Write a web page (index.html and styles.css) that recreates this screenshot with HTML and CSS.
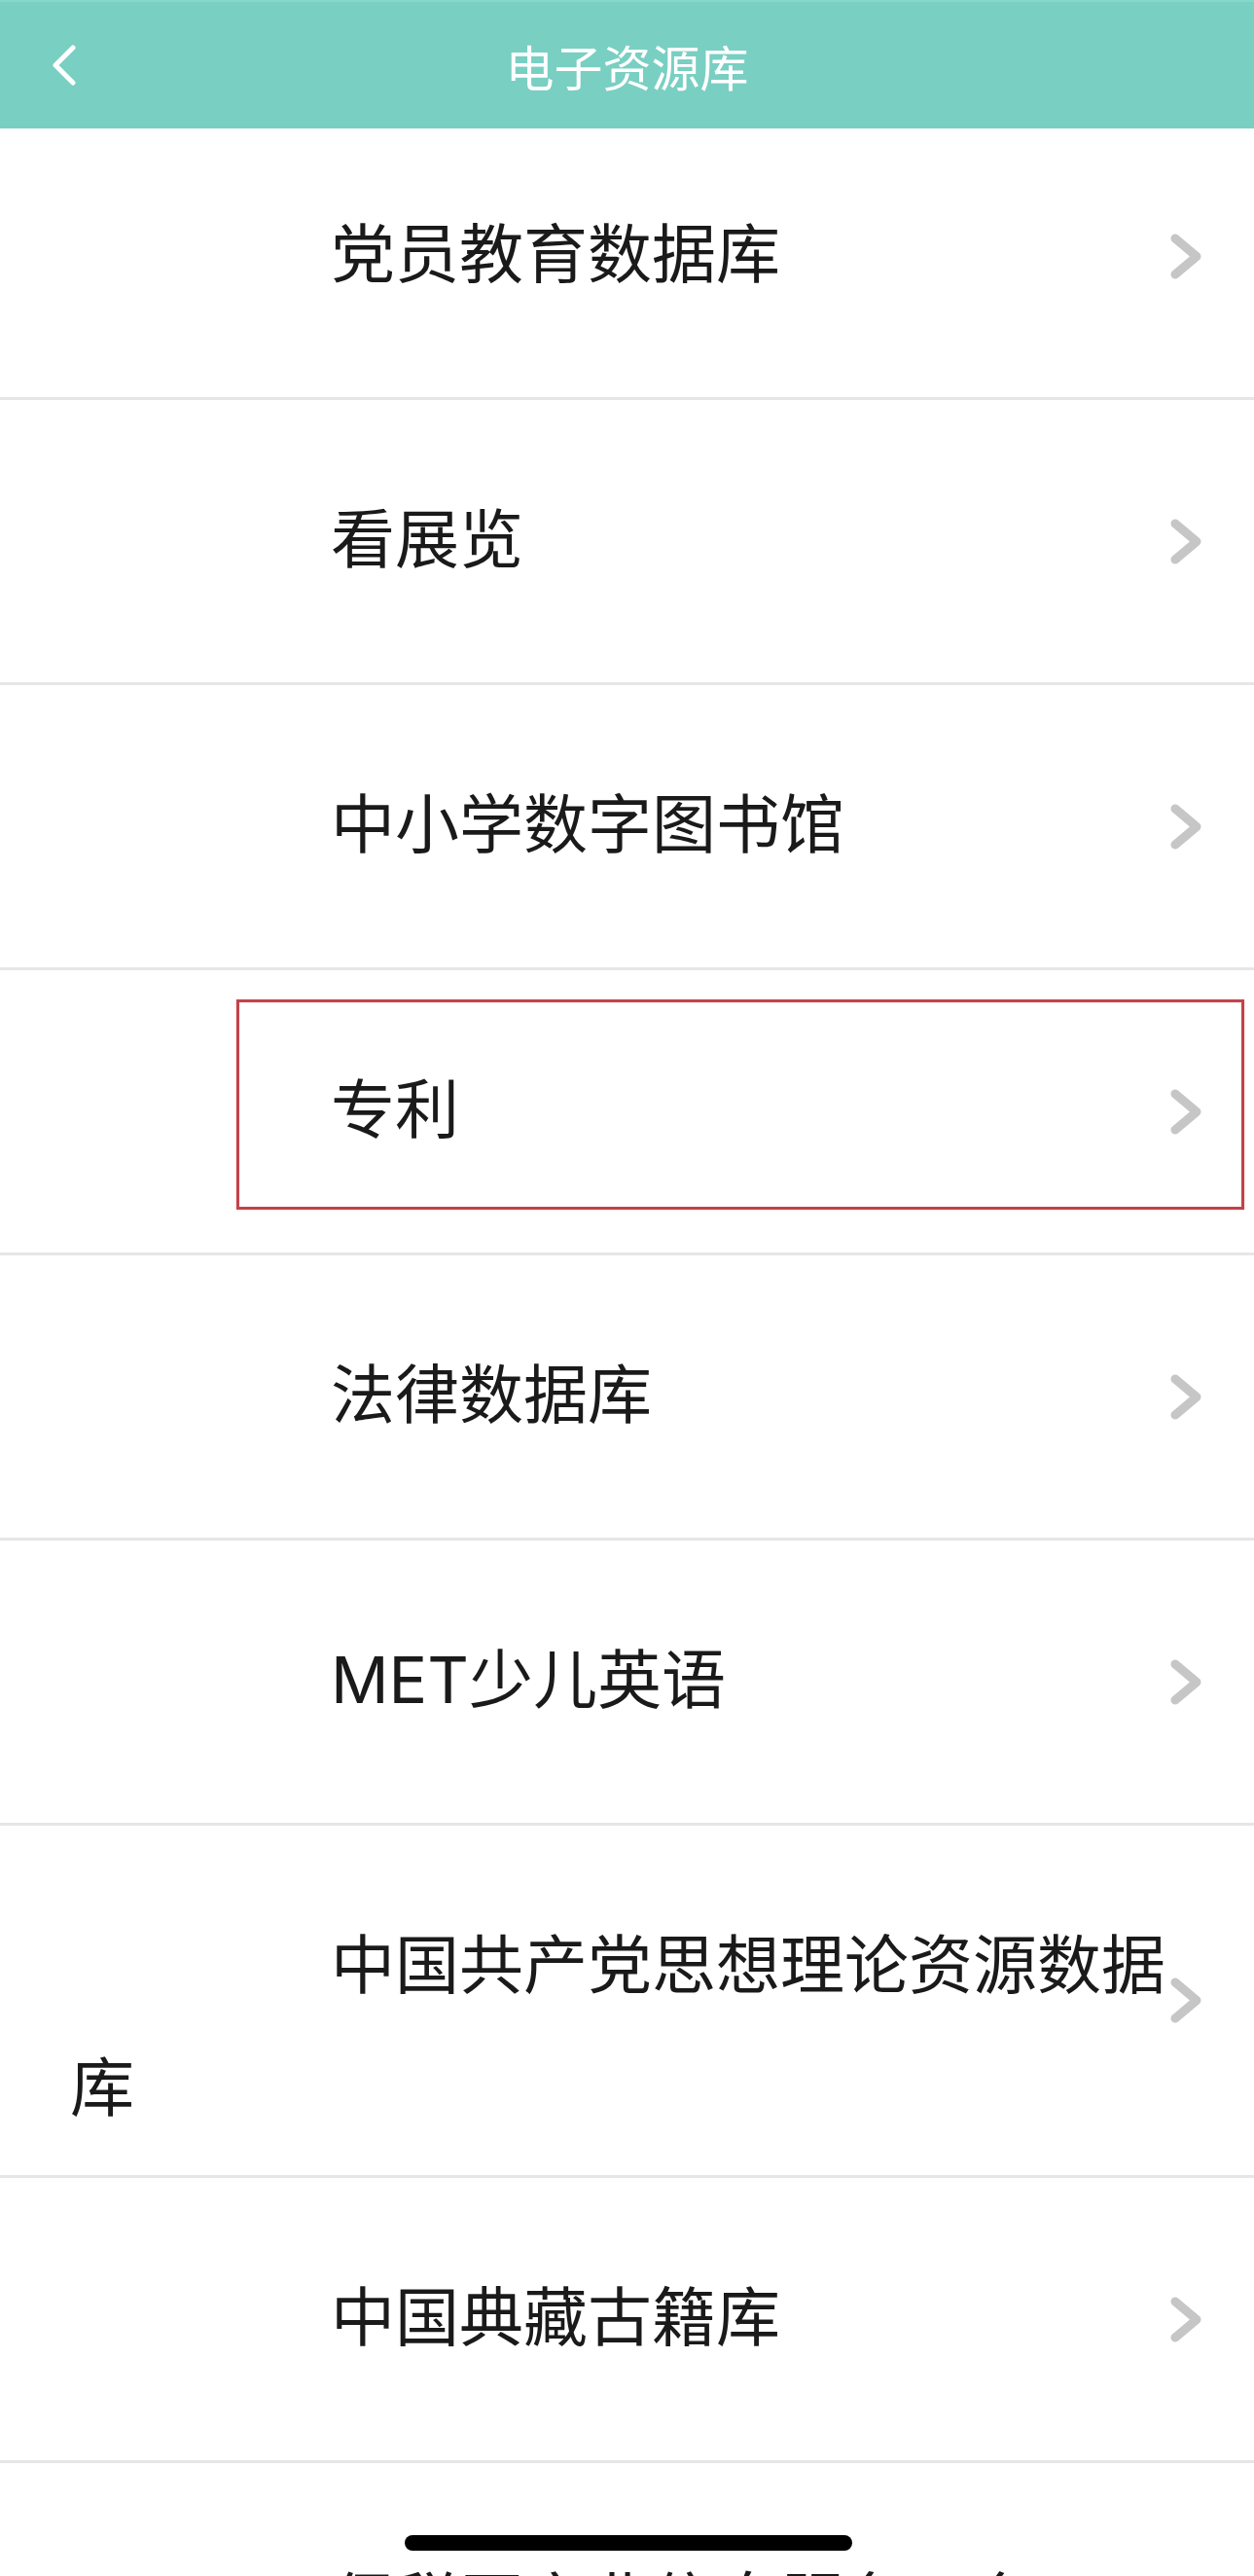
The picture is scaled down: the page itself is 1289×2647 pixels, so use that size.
FILE: index.html
```html
<!DOCTYPE html>
<html lang="zh-CN">
<head>
<meta charset="utf-8">
<title>电子资源库</title>
<link rel="stylesheet" href="styles.css">
</head>
<body>
<div class="app">
  <header class="topbar">
    <span class="back">
      <svg width="28" height="42" viewBox="0 0 28 42"><path d="M23 3 L5 21 L23 39" fill="none" stroke="#fff" stroke-width="5" stroke-linecap="round" stroke-linejoin="round"/></svg>
    </span>
    <h1 class="title">电子资源库</h1>
    <span class="spacer"></span>
  </header>

  <ul class="list">
    <li class="row"><span class="label">党员教育数据库</span><span class="arrow"><svg width="32" height="47" viewBox="0 0 32 47"><path d="M5 5 L27 23.5 L5 42" fill="none" stroke="#c6c6c6" stroke-width="9" stroke-linecap="round" stroke-linejoin="round"/></svg></span></li>
    <li class="row"><span class="label">看展览</span><span class="arrow"><svg width="32" height="47" viewBox="0 0 32 47"><path d="M5 5 L27 23.5 L5 42" fill="none" stroke="#c6c6c6" stroke-width="9" stroke-linecap="round" stroke-linejoin="round"/></svg></span></li>
    <li class="row"><span class="label">中小学数字图书馆</span><span class="arrow"><svg width="32" height="47" viewBox="0 0 32 47"><path d="M5 5 L27 23.5 L5 42" fill="none" stroke="#c6c6c6" stroke-width="9" stroke-linecap="round" stroke-linejoin="round"/></svg></span></li>
    <li class="row"><span class="label">专利</span><span class="arrow"><svg width="32" height="47" viewBox="0 0 32 47"><path d="M5 5 L27 23.5 L5 42" fill="none" stroke="#c6c6c6" stroke-width="9" stroke-linecap="round" stroke-linejoin="round"/></svg></span><span class="mark"></span></li>
    <li class="row"><span class="label">法律数据库</span><span class="arrow"><svg width="32" height="47" viewBox="0 0 32 47"><path d="M5 5 L27 23.5 L5 42" fill="none" stroke="#c6c6c6" stroke-width="9" stroke-linecap="round" stroke-linejoin="round"/></svg></span></li>
    <li class="row"><span class="label">MET少儿英语</span><span class="arrow"><svg width="32" height="47" viewBox="0 0 32 47"><path d="M5 5 L27 23.5 L5 42" fill="none" stroke="#c6c6c6" stroke-width="9" stroke-linecap="round" stroke-linejoin="round"/></svg></span></li>
    <li class="row"><span class="label">中国共产党思想理论资源数据库</span><span class="arrow"><svg width="32" height="47" viewBox="0 0 32 47"><path d="M5 5 L27 23.5 L5 42" fill="none" stroke="#c6c6c6" stroke-width="9" stroke-linecap="round" stroke-linejoin="round"/></svg></span></li>
    <li class="row"><span class="label">中国典藏古籍库</span><span class="arrow"><svg width="32" height="47" viewBox="0 0 32 47"><path d="M5 5 L27 23.5 L5 42" fill="none" stroke="#c6c6c6" stroke-width="9" stroke-linecap="round" stroke-linejoin="round"/></svg></span></li>
    <li class="row"><span class="label">保税区产业信息服务平台</span><span class="arrow"><svg width="32" height="47" viewBox="0 0 32 47"><path d="M5 5 L27 23.5 L5 42" fill="none" stroke="#c6c6c6" stroke-width="9" stroke-linecap="round" stroke-linejoin="round"/></svg></span></li>
  </ul>

  <div class="home-indicator"></div>
</div>
</body>
</html>
```

FILE: styles.css
```css
html, body {
  margin: 0;
  padding: 0;
  background: #ffffff;
}

.app {
  position: relative;
  width: 1289px;
  height: 2647px;
  overflow: hidden;
  font-family: "Inter", "Noto Sans CJK SC", sans-serif;
  background: #ffffff;
}

.topbar {
  position: absolute;
  top: 0;
  left: 0;
  right: 0;
  height: 132px;
  z-index: 2;
  background: #79cfc2;
  border-top: 2px solid #86d6ca;
  box-sizing: border-box;
  display: grid;
  grid-template-columns: 1fr auto 1fr;
  align-items: center;
}

.back {
  justify-self: start;
  margin-left: 52px;
  display: flex;
}

.title {
  margin: 0;
  font-family: "Noto Sans CJK SC", sans-serif;
  font-weight: 400;
  font-size: 50px;
  line-height: 60px;
  color: #ffffff;
}

.list {
  list-style: none;
  margin: 0;
  padding: 118px 0 0;
}

.row {
  position: relative;
  display: flex;
  align-items: center;
  min-height: 290px;
  padding: 0 54px 0 72px;
  border-bottom: 3px solid #e6e6e6;
}

.label {
  flex: 1;
  align-self: flex-start;
  padding: 80px 0 27px;
  text-indent: 268px;
  font-size: 66px;
  line-height: 126px;
  color: #1a1a1a;
}

.arrow {
  flex: none;
  width: 32px;
  height: 47px;
  display: flex;
}

.mark {
  position: absolute;
  left: 243px;
  top: 30px;
  width: 1036px;
  height: 216px;
  box-sizing: border-box;
  border: 3px solid #c2434b;
  box-shadow: 0 0 2px rgba(220, 120, 120, 0.5);
}

.home-indicator {
  position: absolute;
  left: 416px;
  top: 2605px;
  width: 460px;
  height: 16px;
  border-radius: 8px;
  background: #000000;
  z-index: 3;
}
```
